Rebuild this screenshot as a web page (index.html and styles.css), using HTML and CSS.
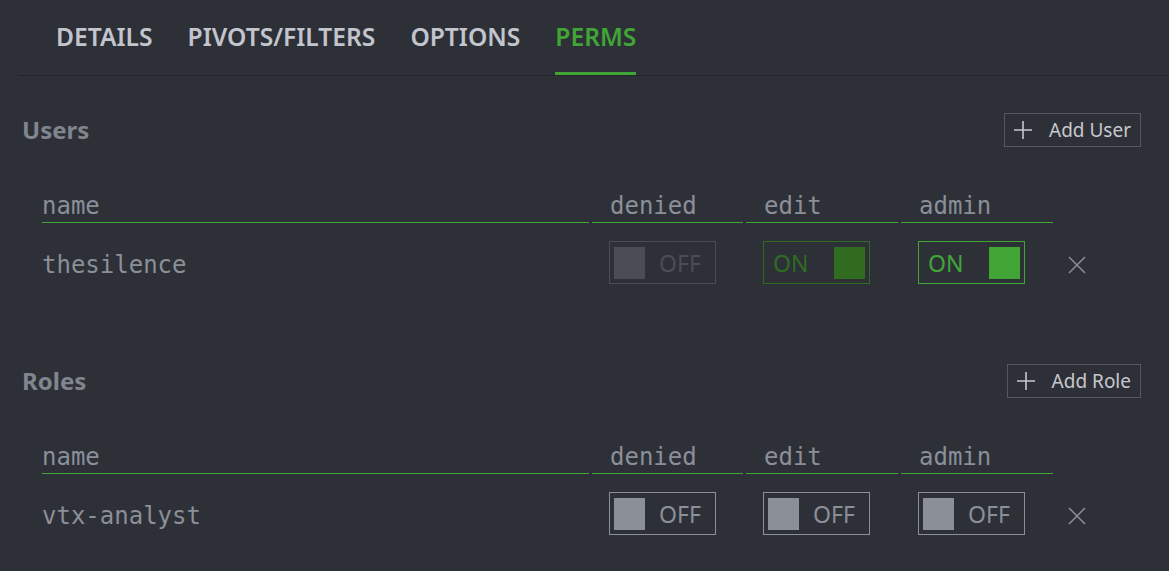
FILE: index.html
```html
<!DOCTYPE html>
<html>
<head>
<meta charset="utf-8">
<link rel="stylesheet" href="styles.css">
</head>
<body>
<div class="page">
  <nav class="tabs">
    <div class="tab">DETAILS</div>
    <div class="tab">PIVOTS/FILTERS</div>
    <div class="tab">OPTIONS</div>
    <div class="tab active">PERMS</div>
  </nav>

  <section class="section">
    <div class="section-head">
      <h2 class="section-title">Users</h2>
      <button class="add-btn"><svg class="plus" viewBox="0 0 20 20" width="20" height="20"><path d="M10 1v18M1 10h18" stroke="currentColor" stroke-width="1.6" fill="none"/></svg><span>Add User</span></button>
    </div>
    <div class="perm-grid">
      <div class="th th-name">name</div>
      <div class="th">denied</div>
      <div class="th">edit</div>
      <div class="th">admin</div>
      <div class="th th-blank"></div>

      <div class="td td-name">thesilence</div>
      <div class="td"><div class="toggle off disabled"><span class="knob"></span><span class="label">OFF</span></div></div>
      <div class="td"><div class="toggle on dim"><span class="label">ON</span><span class="knob"></span></div></div>
      <div class="td"><div class="toggle on"><span class="label">ON</span><span class="knob"></span></div></div>
      <div class="td td-x"><svg class="x" viewBox="0 0 18 18" width="18" height="18"><path d="M1 1l16 16M17 1L1 17" stroke="currentColor" stroke-width="1.5" fill="none"/></svg></div>
    </div>
  </section>

  <section class="section roles">
    <div class="section-head">
      <h2 class="section-title">Roles</h2>
      <button class="add-btn"><svg class="plus" viewBox="0 0 20 20" width="20" height="20"><path d="M10 1v18M1 10h18" stroke="currentColor" stroke-width="1.6" fill="none"/></svg><span>Add Role</span></button>
    </div>
    <div class="perm-grid">
      <div class="th th-name">name</div>
      <div class="th">denied</div>
      <div class="th">edit</div>
      <div class="th">admin</div>
      <div class="th th-blank"></div>

      <div class="td td-name">vtx-analyst</div>
      <div class="td"><div class="toggle off"><span class="knob"></span><span class="label">OFF</span></div></div>
      <div class="td"><div class="toggle off"><span class="knob"></span><span class="label">OFF</span></div></div>
      <div class="td"><div class="toggle off"><span class="knob"></span><span class="label">OFF</span></div></div>
      <div class="td td-x"><svg class="x" viewBox="0 0 18 18" width="18" height="18"><path d="M1 1l16 16M17 1L1 17" stroke="currentColor" stroke-width="1.5" fill="none"/></svg></div>
    </div>
  </section>
</div>
</body>
</html>
```

FILE: styles.css
```css
html, body {
  margin: 0;
  padding: 0;
  background: #2e3038;
  height: 100%;
}

.page {
  font-family: "Noto Sans", "Open Sans", sans-serif;
  color: #8a8f98;
  overflow: hidden;
}

.tabs {
  display: flex;
  gap: 35px;
  margin-left: 18px;
  padding-left: 38px;
  border-bottom: 1px solid #23252b;
}

.tab {
  font-size: 24.6px;
  font-weight: 600;
  line-height: 34px;
  color: #c2c5cd;
  padding-top: 20px;
  padding-bottom: 18px;
  border-bottom: 3px solid transparent;
}

.tab.active {
  color: #41a535;
  border-bottom-color: #41a535;
}

.section {
  padding: 0 28px 0 22px;
  margin-top: 37px;
}

.section.roles {
  margin-top: 78px;
}

.section-head {
  display: flex;
  justify-content: space-between;
  align-items: center;
  height: 34px;
}

.section-title {
  margin: 0;
  font-size: 24px;
  font-weight: 700;
  color: #80858e;
  line-height: 36px;
}

.add-btn {
  display: flex;
  align-items: center;
  gap: 16px;
  height: 34px;
  box-sizing: border-box;
  padding: 0 9px 0 8px;
  background: transparent;
  border: 1px solid #55585f;
  color: #c6c8ce;
  font-family: "Noto Sans", sans-serif;
  font-size: 19px;
  line-height: 32px;
  cursor: pointer;
}

.add-btn .plus {
  color: #c6c8ce;
  display: block;
}

.perm-grid {
  display: grid;
  grid-template-columns: 547px 151px 152px 152px 50px;
  column-gap: 3px;
  margin-left: 20px;
  margin-top: 45px;
}

.th {
  font-family: "DejaVu Sans Mono", monospace;
  font-size: 24px;
  line-height: 28px;
  padding: 0 0 2px 18px;
  color: #8a8f98;
  border-bottom: 1px solid #41a535;
}

.th.th-name {
  padding-left: 0;
}

.th.th-blank {
  border-bottom: none;
}

.td {
  padding-top: 18px;
  padding-left: 17px;
  height: 43px;
  display: flex;
  align-items: center;
}

.td.td-name {
  padding-left: 0;
  font-family: "DejaVu Sans Mono", monospace;
  font-size: 24px;
  color: #8a8f98;
  padding-top: 20px;
}

.td.td-x {
  padding-left: 12px;
  color: #8a8f98;
  padding-top: 20px;
}

.x {
  display: block;
}

.toggle {
  box-sizing: border-box;
  width: 107px;
  height: 43px;
  border: 1px solid #8a8f98;
  display: flex;
  align-items: center;
  padding: 0 4px;
  font-size: 23px;
  color: #8a8f98;
}

.toggle .knob {
  width: 31px;
  height: 32px;
  background: #8a8f98;
  flex: none;
}

.toggle.off .label {
  margin-left: 14px;
}

.toggle.on {
  justify-content: space-between;
  padding-left: 9px;
  border-color: #41a535;
  color: #41a535;
}

.toggle.on .knob {
  background: #41a535;
}

.toggle.off.disabled {
  border-color: #4a4d55;
  color: #4a4d55;
}

.toggle.off.disabled .knob {
  background: #4a4d56;
}

.toggle.on.dim {
  border-color: #2e6b22;
  color: #2f6b22;
}

.toggle.on.dim .knob {
  background: #306b20;
}
```
